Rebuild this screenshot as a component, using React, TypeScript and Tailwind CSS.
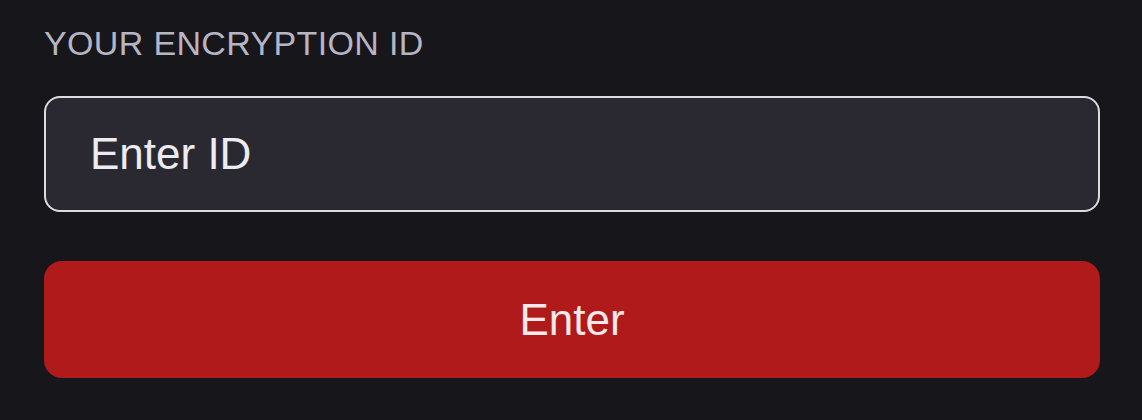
import React from 'react';

const App: React.FC = () => {
  return (
    <div className="w-full h-[420px] bg-[#17161b] pl-[44px] pr-[42px] pt-[23px] font-['Liberation_Sans',Arial,sans-serif]">
      <label htmlFor="enc-id" className="block text-[34px] leading-[40px] tracking-[0.35px] text-[#b6b5c4] uppercase">
        Your Encryption ID
      </label>
      <input
        id="enc-id"
        type="text"
        placeholder="Enter ID"
        className="mt-[33px] block w-full h-[116px] rounded-[16px] border-2 border-[#dcdbe2] bg-[#2a2932] px-[44px] text-[44px] text-[#ececf0] placeholder:text-[#ececf0] outline-none"
      />
      <button className="mt-[49px] block w-full h-[117px] rounded-[18px] bg-[#b01a1a] text-[44px] text-[#f5e9e9]">
        Enter
      </button>
    </div>
  );
};

export default App;
